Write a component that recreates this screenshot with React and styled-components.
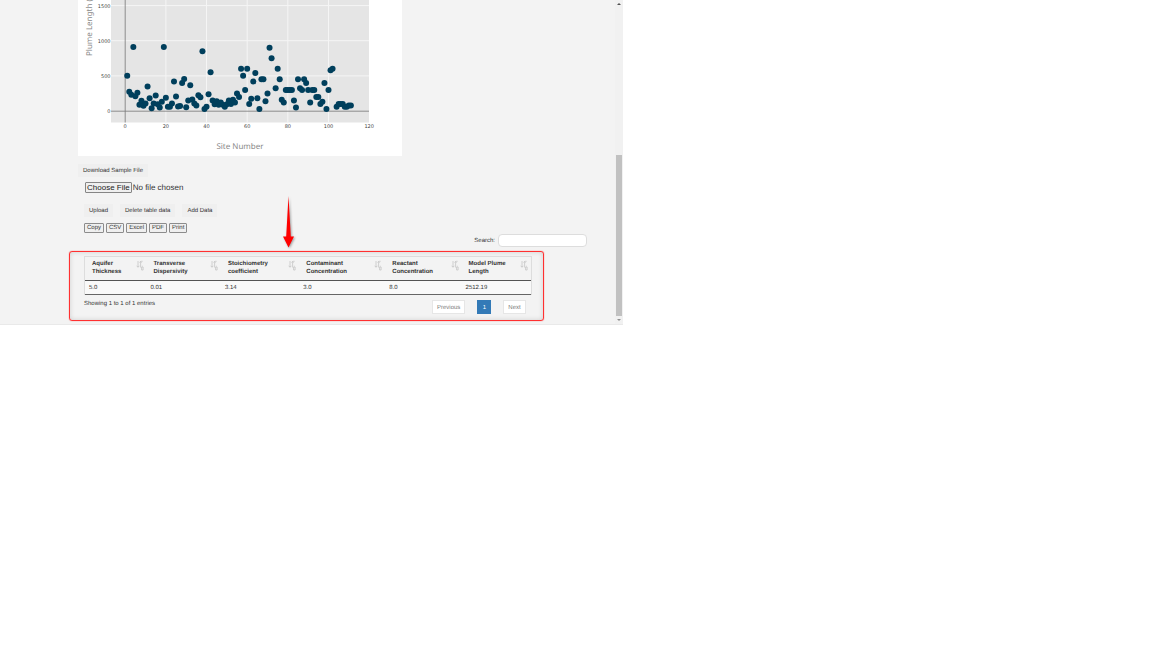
import React from "react";
import styled, { createGlobalStyle } from "styled-components";

const GlobalStyle = createGlobalStyle`
  *, *::before, *::after { box-sizing: border-box; }
  body {
    margin: 0;
    background: #fff;
    color: #333;
    font-family: "Liberation Sans", Arial, sans-serif;
    font-size: 6px;
    line-height: 8px;
    text-rendering: geometricPrecision;
  }
  button, input { font-family: inherit; color: inherit; text-rendering: inherit; }
`;

const Page = styled.div`
  display: grid;
  grid-template-columns: minmax(0, 623fr) minmax(0, 529fr);
  align-items: start;
`;

const Viewport = styled.div`
  display: flex;
  background: #f3f3f3;
  border-bottom: 1px solid #e9e9e9;
`;

const Content = styled.main`
  flex: 1;
  min-width: 0;
  padding: 0 28px 10px 78px;
`;

const ScrollBar = styled.div`
  flex: none;
  width: 8px;
  display: flex;
  flex-direction: column;
  align-items: center;
  background: #f1f1f1;
`;

const ScrollArrow = styled.svg`
  flex: none;
  width: 8px;
  height: 8px;
`;

const ScrollTrack = styled.div`
  flex: ${(p) => p.$share};
  width: 6px;
  background: ${(p) => (p.$thumb ? "#c1c1c1" : "transparent")};
`;

const Chart = styled.svg`
  display: block;
  width: 324px;
  max-width: 100%;
  background: #fff;
  font-family: "DejaVu Sans", Verdana, sans-serif;
`;

const AxisTitle = styled.text`
  font-family: "Noto Sans", "Open Sans", sans-serif;
  font-size: 8px;
  fill: #8a8a8a;
`;

const PlainButton = styled.button`
  height: 13px;
  padding: 1px 5px 0;
  border: 0;
  background: #efefef;
  font-size: 6px;
  line-height: 8px;
`;

const Download = styled.div`
  display: flex;
  padding-top: 8px;
`;

const Panel = styled.section`
  padding-left: 6px;
`;

const FileInput = styled.input`
  display: block;
  width: 120px;
  height: 12px;
  margin: 5px 0 10px 1px;
  font-size: 8px;
  line-height: 10px;

  &::file-selector-button {
    height: 11px;
    margin: 0 1px 0 0;
    padding: 0 1px;
    border: 1px solid #858585;
    border-radius: 1px;
    background: #efefef;
    font: inherit;
    line-height: 9px;
    color: #222;
  }
`;

const ButtonRow = styled.div`
  display: flex;
  gap: ${(p) => p.$gap}px;
  margin-bottom: ${(p) => p.$after}px;
`;

const ExportButton = styled.button`
  height: 10px;
  padding: 0 2px;
  border: 1px solid #8c8c8c;
  border-radius: 1px;
  background: #efefef;
  font-size: 6px;
  line-height: 8px;
`;

const SearchBar = styled.label`
  display: flex;
  justify-content: flex-end;
  align-items: center;
  gap: 3px;
  margin: 1px 0 9px;
`;

const SearchInput = styled.input`
  width: 89px;
  height: 13px;
  padding: 0 4px;
  border: 1px solid #ddd;
  border-radius: 4px;
  background: #fff;
  font-size: 6px;
`;

const TableArea = styled.div`
  position: relative;
  width: 89%;
`;

const DataTable = styled.table`
  width: 100%;
  table-layout: fixed;
  border-collapse: separate;
  border-spacing: 0;
  border: solid #ddd;
  border-width: 1px 1px 0 1px;
`;

const HeadCell = styled.th`
  width: ${(p) => p.$width}%;
  height: 24px;
  padding: 3px 3px 0 7px;
  border-bottom: 1px solid #555;
  text-align: left;
  vertical-align: top;
`;

const HeadLabel = styled.div`
  display: flex;
  justify-content: space-between;
  gap: 5px;
`;

const SortIcon = styled.svg`
  flex: none;
  width: 8px;
  height: 12px;
`;

const BodyCell = styled.td`
  height: 14px;
  padding: 1px 3px 0 4px;
  border-bottom: 1px solid #666;
  background: #f9f9f9;
`;

const TableFooter = styled.div`
  display: flex;
  justify-content: space-between;
  align-items: flex-start;
  padding: 5px 6px 0 0;
`;

const Info = styled.div`
  line-height: 8px;
`;

const Pager = styled.nav`
  display: flex;
  gap: 12px;
`;

const PageButton = styled.button`
  height: 14px;
  padding: 1px 4px 0;
  border: 1px solid ${(p) => (p.$current ? "#337ab7" : "#e6e6e6")};
  background: ${(p) => (p.$current ? "#337ab7" : "#fff")};
  color: ${(p) => (p.$current ? "#fff" : "#777")};
  font-size: 6px;
  line-height: 8px;
  min-width: 14px;
`;

const Highlight = styled.div`
  position: absolute;
  inset: -5px -12px -7px -15px;
  border: 1px solid #ff3030;
  border-radius: 3px;
  box-shadow: 0 0 1px #ff3030, inset 0 0 5px rgba(0, 0, 0, 0.15);
  pointer-events: none;
`;

const Pointer = styled.svg`
  position: absolute;
  left: 197px;
  top: -61px;
  width: 16px;
  height: 56px;
  filter: drop-shadow(1px 1px 1px rgba(0, 0, 0, 0.35));
  pointer-events: none;
`;

const lengths = [
  500, 275, 230, 910, 210, 260, 90, 145, 75, 105, 350, 180, 40, 105, 220, 95,
  50, 130, 910, 190, 60, 60, 105, 420, 205, 65, 70, 400, 455, 55, 150, 365, 165,
  105, 80, 225, 195, 850, 30, 60, 240, 550, 150, 95, 140, 90, 120, 90, 60, 95,
  150, 100, 160, 120, 250, 200, 600, 500, 300, 600, 100, 175, 420, 540, 180, 30,
  450, 450, 140, 250, 900, 750, null, 325, 600, 450, 160, 120, 300, 300, 300,
  300, 150, 50, 450, 325, 300, 450, 400, 300, 120, 300, 300, 200, 200, 100, 130,
  400, 30, 300, 580, 600, null, 60, 100, 100, 100, 60, 60, 80, 80,
];

const toX = (site) => 47.2 + site * 2.033;
const toY = (length) => 111 - length * 0.0703;

const columns = [
  { title: "Aquifer Thickness", value: "5.0", width: 13.8 },
  { title: "Transverse Dispersivity", value: "0.01", width: 16.7 },
  { title: "Stoichiometry coefficient", value: "3.14", width: 17.6 },
  { title: "Contaminant Concentration", value: "3.0", width: 19.3 },
  { title: "Reactant Concentration", value: "8.0", width: 17.1 },
  { title: "Model Plume Length", value: "2512.19", width: 15.5 },
];

function PlumeChart() {
  return (
    <Chart viewBox="0 0 324 156" role="img" aria-label="Plume length by site number">
      <rect x="33" y="0" width="258" height="122.5" fill="#e5e5e5" />
      <g stroke="#f5f5f5" strokeWidth="1">
        {[20, 40, 60, 80, 100].map((v) => (
          <line key={v} x1={toX(v)} x2={toX(v)} y1="0" y2="122.5" />
        ))}
        {[500, 1000, 1500].map((v) => (
          <line key={v} x1="33" x2="291" y1={toY(v)} y2={toY(v)} />
        ))}
      </g>
      <g stroke="#777" strokeWidth="0.8">
        <line x1={toX(0)} x2={toX(0)} y1="0" y2="122.5" />
        <line x1="33" x2="291" y1="111.2" y2="111.2" />
      </g>
      <g fill="#003f5c">
        {lengths.map((v, i) =>
          v === null ? null : <circle key={i} cx={toX(i + 1)} cy={toY(v)} r="3" />
        )}
      </g>
      <g fill="#444" fontSize="5" textAnchor="end">
        {[0, 500, 1000, 1500].map((v) => (
          <text key={v} x="32.5" y={toY(v) + 2}>{v}</text>
        ))}
      </g>
      <g fill="#444" fontSize="5" textAnchor="middle">
        {[0, 20, 40, 60, 80, 100, 120].map((v) => (
          <text key={v} x={toX(v)} y="128">{v}</text>
        ))}
      </g>
      <AxisTitle x="162" y="149" textAnchor="middle">Site Number</AxisTitle>
      <AxisTitle transform="translate(14 56) rotate(-90)">Plume Length (</AxisTitle>
    </Chart>
  );
}

function SortMark() {
  return (
    <SortIcon viewBox="0 0 8 12" fill="none" stroke="#c4c4c4" strokeWidth="0.8" aria-hidden="true">
      <path d="M2 1v6M0.7 5.8L2 7.3l1.3-1.5M4.6 7.5V1.6M3.6 2.6l1-1.3 1 1.3M5.2 1.3h1.4M6.4 5.8v0.6M5.6 7h1.5v3H5.6z" />
    </SortIcon>
  );
}

export default function App() {
  return (
    <>
      <GlobalStyle />
      <Page>
        <Viewport>
          <Content>
            <PlumeChart />
            <Download>
              <PlainButton type="button">Download Sample File</PlainButton>
            </Download>
            <Panel>
              <FileInput type="file" aria-label="Data file" />
              <ButtonRow $gap={7} $after={6}>
                <PlainButton type="button">Upload</PlainButton>
                <PlainButton type="button">Delete table data</PlainButton>
                <PlainButton type="button">Add Data</PlainButton>
              </ButtonRow>
              <ButtonRow $gap={2} $after={0}>
                {["Copy", "CSV", "Excel", "PDF", "Print"].map((name) => (
                  <ExportButton key={name} type="button">{name}</ExportButton>
                ))}
              </ButtonRow>
              <SearchBar>
                Search:
                <SearchInput type="search" />
              </SearchBar>
              <TableArea>
                <DataTable>
                  <thead>
                    <tr>
                      {columns.map((c) => (
                        <HeadCell key={c.title} $width={c.width} scope="col">
                          <HeadLabel>
                            {c.title}
                            <SortMark />
                          </HeadLabel>
                        </HeadCell>
                      ))}
                    </tr>
                  </thead>
                  <tbody>
                    <tr>
                      {columns.map((c) => (
                        <BodyCell key={c.title}>{c.value}</BodyCell>
                      ))}
                    </tr>
                  </tbody>
                </DataTable>
                <TableFooter>
                  <Info>Showing 1 to 1 of 1 entries</Info>
                  <Pager aria-label="Table pages">
                    <PageButton type="button">Previous</PageButton>
                    <PageButton type="button" $current aria-current="page">1</PageButton>
                    <PageButton type="button">Next</PageButton>
                  </Pager>
                </TableFooter>
                <Highlight />
                <Pointer viewBox="0 0 16 56" aria-hidden="true">
                  <path d="M7.5 1L9.8 41.5H13L7.5 52.5 2 41.5H5.2z" fill="#f00" />
                </Pointer>
              </TableArea>
            </Panel>
          </Content>
          <ScrollBar aria-hidden="true">
            <ScrollArrow viewBox="0 0 8 8"><path d="M2 5l2-2 2 2z" fill="#505050" /></ScrollArrow>
            <ScrollTrack $share={147} />
            <ScrollTrack $share={162} $thumb />
            <ScrollArrow viewBox="0 0 8 8"><path d="M2 3l2 2 2-2z" fill="#909090" /></ScrollArrow>
          </ScrollBar>
        </Viewport>
      </Page>
    </>
  );
}
